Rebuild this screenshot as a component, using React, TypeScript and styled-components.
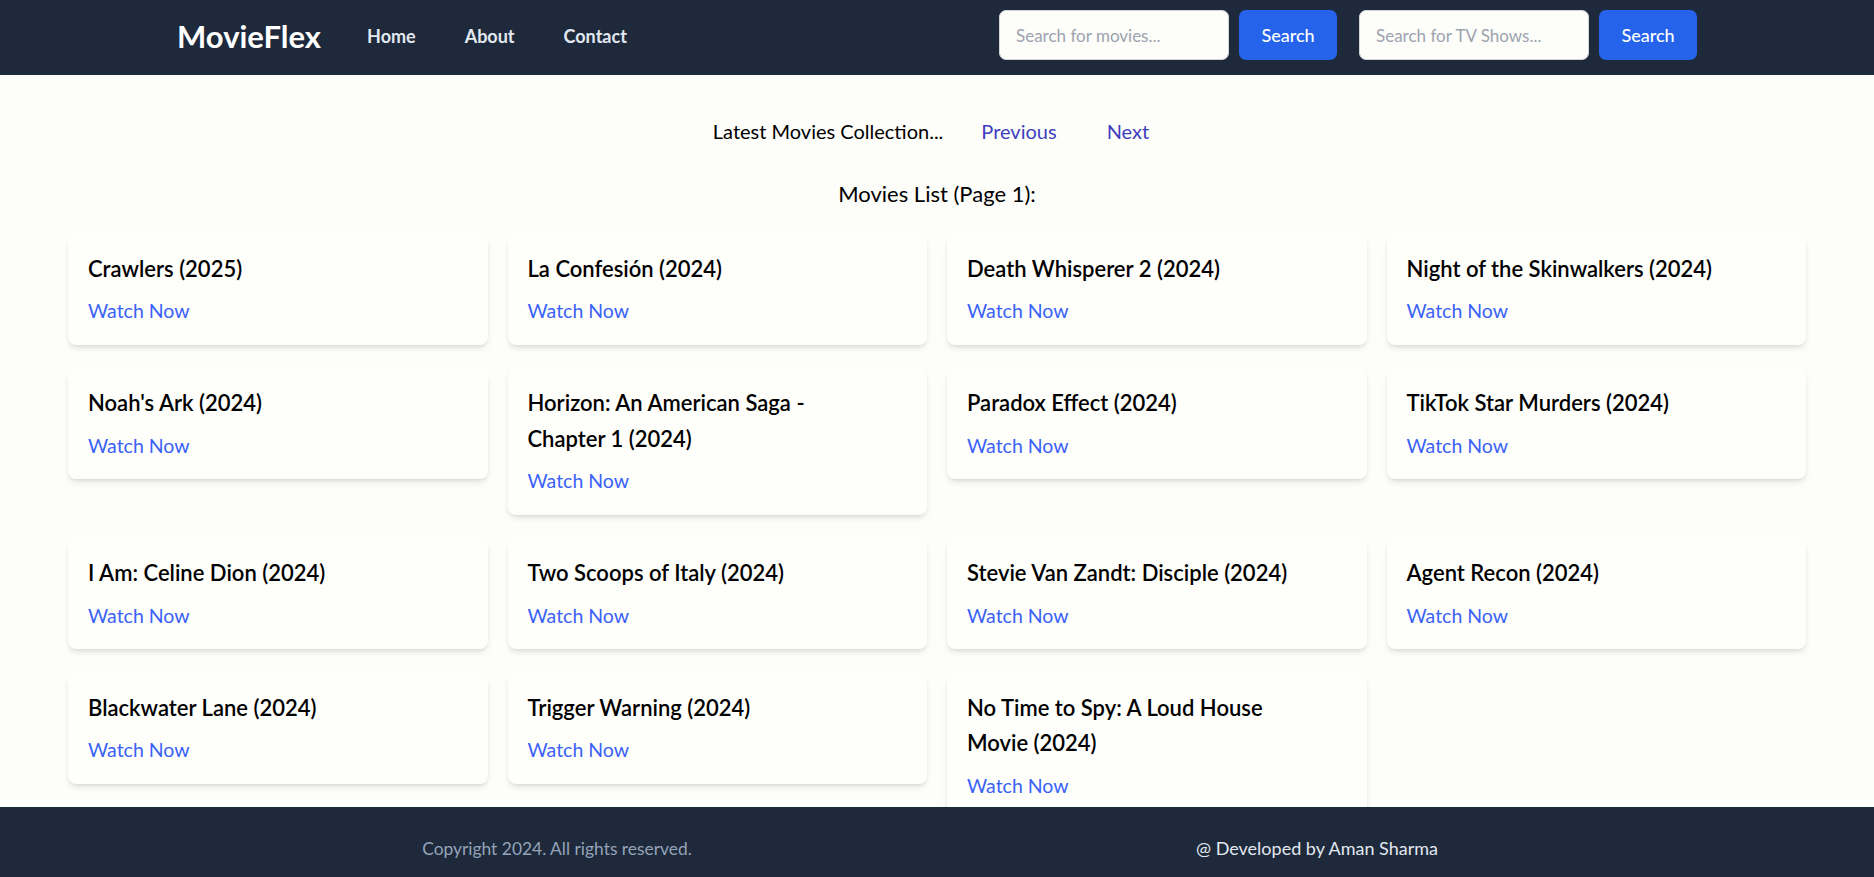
import React from "react";
import styled, { createGlobalStyle } from "styled-components";

const GlobalStyle = createGlobalStyle`
  * { box-sizing: border-box; }
  html, body { margin: 0; padding: 0; }
  body {
    background: #fdfdf9;
    font-family: Lato, "Noto Sans", "Liberation Sans", sans-serif;
    color: #000;
    overflow: hidden;
  }
`;

const NavBar = styled.nav`
  background: #1e293b;
  height: 75px;
  padding: 10px 0 15px;
`;

const NavInner = styled.div`
  width: 1520px;
  margin: 0 auto;
  height: 50px;
  display: flex;
  align-items: center;
  justify-content: space-between;
`;

const LeftGroup = styled.div`
  display: flex;
  align-items: center;
`;

const Logo = styled.a`
  font-size: 31px;
  font-weight: 700;
  color: #ffffff;
  text-decoration: none;
  margin: 1px 46px 0 0;
`;

const NavLink = styled.a`
  font-size: 18px;
  font-weight: 700;
  color: #e2e8f0;
  text-decoration: none;
  margin: 2px 49px 0 0;
`;

const SearchGroup = styled.form`
  display: flex;
  align-items: center;
  gap: 10px;
  & + & {
    margin-left: 22px;
  }
`;

const SearchInput = styled.input`
  width: 230px;
  height: 50px;
  border: 1px solid #d1d5db;
  border-radius: 7px;
  background: #fdfdf9;
  padding: 0 16px;
  font-family: inherit;
  font-size: 17px;
  color: #111;
  outline: none;
  &::placeholder {
    color: #9ca3af;
  }
`;

const SearchButton = styled.button`
  width: 98px;
  height: 50px;
  border: none;
  border-radius: 7px;
  background: #2563eb;
  color: #ffffff;
  font-family: inherit;
  font-size: 18px;
  font-weight: 500;
  cursor: pointer;
`;

const Main = styled.main`
  padding: 0 68px 120px;
`;

const PagerBar = styled.div`
  display: flex;
  align-items: center;
  justify-content: center;
  gap: 26px;
  margin-top: 41px;
  font-size: 20px;
  line-height: 30px;
`;

const PagerLabel = styled.span`
  color: #000;
`;

const PagerButton = styled.button`
  background: none;
  border: none;
  padding: 0 12px;
  font-family: inherit;
  font-size: 20px;
  line-height: 30px;
  color: #3f3dbf;
  cursor: pointer;
`;

const ListHeading = styled.h2`
  margin: 31px 0 25px;
  text-align: center;
  font-size: 22px;
  line-height: 33px;
  font-weight: 400;
`;

const Grid = styled.div`
  display: grid;
  grid-template-columns: repeat(4, 1fr);
  column-gap: 20px;
  row-gap: 24.5px;
  align-items: start;
`;

const Card = styled.div`
  background: #fefefb;
  border-radius: 8px;
  padding: 16px 44px 20.7px 20px;
  box-shadow: 0 4px 6px -1px rgba(0, 0, 0, 0.1), 0 2px 4px -2px rgba(0, 0, 0, 0.1);
`;

const CardTitle = styled.h3`
  margin: 0 0 10.8px;
  font-size: 22px;
  line-height: 35.5px;
  font-weight: 600;
`;

const WatchLink = styled.a`
  display: block;
  font-size: 19.5px;
  line-height: 27px;
  color: #3b62f6;
  text-decoration: none;
`;

const Footer = styled.footer`
  position: fixed;
  left: 0;
  right: 0;
  bottom: -12px;
  height: 82px;
  background: #1e293b;
`;

const FooterInner = styled.div`
  width: 1520px;
  height: 100%;
  margin: 0 auto;
  display: grid;
  grid-template-columns: 1fr 1fr;
  align-items: center;
  text-align: center;
`;

const FooterText = styled.p<{ $light?: boolean }>`
  margin: 0;
  font-size: ${(p) => (p.$light ? "18px" : "17.4px")};
  color: ${(p) => (p.$light ? "#e2e8f0" : "#94a3b8")};
`;

const movies = [
  "Crawlers (2025)",
  "La Confesión (2024)",
  "Death Whisperer 2 (2024)",
  "Night of the Skinwalkers (2024)",
  "Noah's Ark (2024)",
  "Horizon: An American Saga - Chapter 1 (2024)",
  "Paradox Effect (2024)",
  "TikTok Star Murders (2024)",
  "I Am: Celine Dion (2024)",
  "Two Scoops of Italy (2024)",
  "Stevie Van Zandt: Disciple (2024)",
  "Agent Recon (2024)",
  "Blackwater Lane (2024)",
  "Trigger Warning (2024)",
  "No Time to Spy: A Loud House Movie (2024)",
];

export default function App() {
  return (
    <>
      <GlobalStyle />
      <NavBar>
        <NavInner>
          <LeftGroup>
            <Logo href="#">MovieFlex</Logo>
            <NavLink href="#">Home</NavLink>
            <NavLink href="#">About</NavLink>
            <NavLink href="#">Contact</NavLink>
          </LeftGroup>
          <LeftGroup>
            <SearchGroup onSubmit={(e) => e.preventDefault()}>
              <SearchInput placeholder="Search for movies..." />
              <SearchButton type="submit">Search</SearchButton>
            </SearchGroup>
            <SearchGroup onSubmit={(e) => e.preventDefault()}>
              <SearchInput placeholder="Search for TV Shows..." />
              <SearchButton type="submit">Search</SearchButton>
            </SearchGroup>
          </LeftGroup>
        </NavInner>
      </NavBar>
      <Main>
        <PagerBar>
          <PagerLabel>Latest Movies Collection...</PagerLabel>
          <PagerButton>Previous</PagerButton>
          <PagerButton>Next</PagerButton>
        </PagerBar>
        <ListHeading>Movies List (Page 1):</ListHeading>
        <Grid>
          {movies.map((m) => (
            <Card key={m}>
              <CardTitle>{m}</CardTitle>
              <WatchLink href="#">Watch Now</WatchLink>
            </Card>
          ))}
        </Grid>
      </Main>
      <Footer>
        <FooterInner>
          <FooterText>Copyright 2024. All rights reserved.</FooterText>
          <FooterText $light>@ Developed by Aman Sharma</FooterText>
        </FooterInner>
      </Footer>
    </>
  );
}
